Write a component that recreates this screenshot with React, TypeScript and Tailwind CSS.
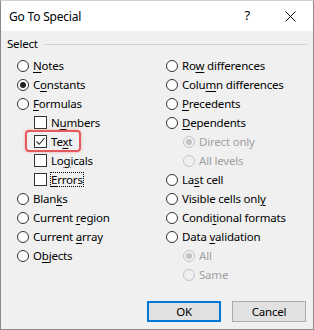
import type { ReactNode } from "react";

const font = { fontFamily: '"Noto Sans", "Open Sans", sans-serif' };

function U({ children }: { children: ReactNode }) {
  return <span className="underline underline-offset-[2px] decoration-1">{children}</span>;
}

function Radio({
  label,
  checked = false,
  disabled = false,
}: {
  label: ReactNode;
  checked?: boolean;
  disabled?: boolean;
}) {
  return (
    <div className="flex items-center h-[19px] gap-[4px]">
      <span
        className={
          "w-[12px] h-[12px] rounded-full border flex items-center justify-center shrink-0 " +
          (disabled ? "border-[#c4c4c4] bg-[#f0f0f0]" : "border-[#333] bg-white")
        }
      >
        {checked && (
          <span
            className={
              "w-[6px] h-[6px] rounded-full " + (disabled ? "bg-[#c4c4c4]" : "bg-[#222]")
            }
          />
        )}
      </span>
      <span className={disabled ? "text-[#a0a0a0]" : "text-black"}>{label}</span>
    </div>
  );
}

function Check({ label, checked = false, focus = false }: { label: ReactNode; checked?: boolean; focus?: boolean }) {
  return (
    <div className="flex items-center h-[19px] gap-[4px]">
      <span className="w-[13px] h-[13px] border border-[#333] bg-white shrink-0 flex items-center justify-center">
        {checked && (
          <svg width="11" height="11" viewBox="0 0 11 11">
            <path d="M1.5 5.5 L4.2 8.3 L9.5 2" fill="none" stroke="#222" strokeWidth="1.1" />
          </svg>
        )}
      </span>
      <span className={focus ? "outline outline-1 outline-dotted outline-black leading-[13px]" : ""}>{label}</span>
    </div>
  );
}

export default function App() {
  return (
    <div
      className="w-[314px] h-[330px] flex flex-col border border-[#8a8a8a] border-t-[#d0d0d0] text-[11.5px] tracking-[-0.2px] text-black bg-[#f0f0f0] overflow-hidden"
      style={font}
    >
      <div className="h-[30px] bg-white flex items-center pl-[8px] shrink-0">
        <span className="text-[12px] mt-[1px]">Go To Special</span>
        <span className="ml-auto text-[13px] mr-[35px]">?</span>
        <svg width="11" height="11" viewBox="0 0 11 11" className="mr-[17px]">
          <path d="M0.5 0.5 L10.5 10.5 M10.5 0.5 L0.5 10.5" stroke="#111" strokeWidth="1" />
        </svg>
      </div>

      <div className="flex items-center h-[24px] pl-[6px] pr-[6px] mt-[1px]">
        <span>Select</span>
        <div className="flex-1 h-px bg-[#d5d5d5] ml-[6px]" />
      </div>

      <div className="flex">
        <div className="w-[149px] pl-[16px] flex flex-col">
          <Radio label={<><U>N</U>otes</>} />
          <Radio label={<>C<U>o</U>nstants</>} checked />
          <Radio label={<><U>F</U>ormulas</>} />
          <div className="pl-[17px] flex flex-col">
            <Check label={<>N<U>u</U>mbers</>} />
            <div className="relative">
              <div className="absolute -left-[9px] -top-[2px] w-[56px] h-[22px] rounded-[4px] border-2 border-[#e65a5d] shadow-[0_0_3px_rgba(230,90,93,0.5)]" />
              <Check label={<>Te<U>x</U>t</>} checked />
            </div>
            <Check label={<>Lo<U>g</U>icals</>} />
            <Check label={<><U>E</U>rrors</>} focus />
          </div>
          <Radio label={<>Blan<U>k</U>s</>} />
          <Radio label={<>Current <U>r</U>egion</>} />
          <Radio label={<>Current <U>a</U>rray</>} />
          <Radio label={<>O<U>b</U>jects</>} />
        </div>
        <div className="pl-[16px] flex flex-col">
          <Radio label={<>Ro<U>w</U> differences</>} />
          <Radio label={<>Colu<U>m</U>n differences</>} />
          <Radio label={<><U>P</U>recedents</>} />
          <Radio label={<><U>D</U>ependents</>} />
          <div className="pl-[17px] flex flex-col">
            <Radio label="Direct only" checked disabled />
            <Radio label="All levels" disabled />
          </div>
          <Radio label={<>La<U>s</U>t cell</>} />
          <Radio label={<>Visible cells onl<U>y</U></>} />
          <Radio label={<>Condi<U>t</U>ional formats</>} />
          <Radio label={<>Data <U>v</U>alidation</>} />
          <div className="pl-[17px] flex flex-col">
            <Radio label="All" checked disabled />
            <Radio label="Same" disabled />
          </div>
        </div>
      </div>

      <div className="flex justify-end gap-[11px] pr-[7px] mt-auto mb-[7px]">
        <button className="w-[74px] h-[21px] border-2 border-[#0078d7] bg-[#e1e1e1] flex items-center justify-center">
          OK
        </button>
        <button className="w-[74px] h-[21px] border border-[#adadad] bg-[#e1e1e1] flex items-center justify-center">
          Cancel
        </button>
      </div>
    </div>
  );
}
